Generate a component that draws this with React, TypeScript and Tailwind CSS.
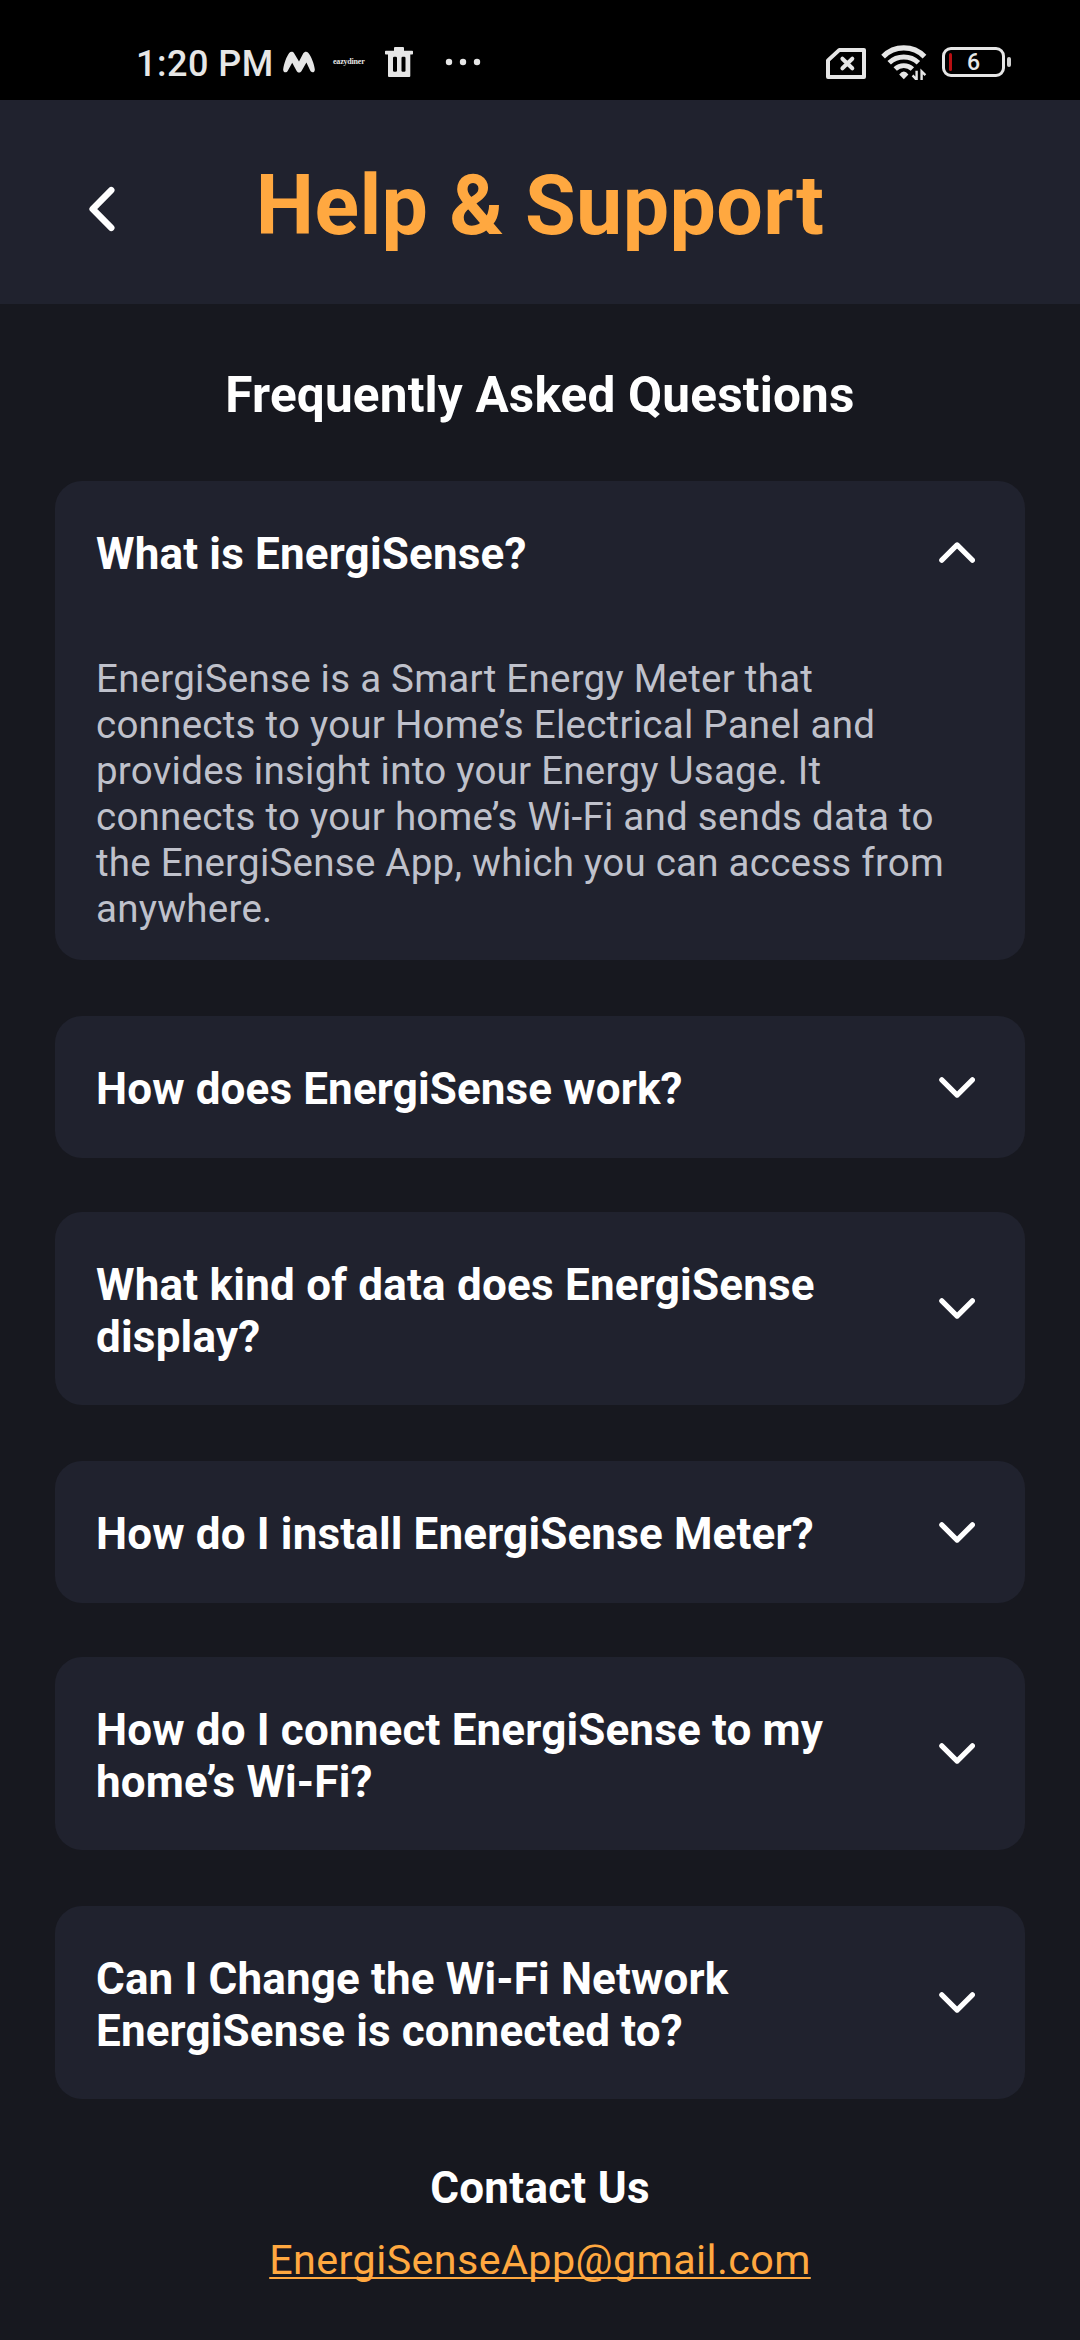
import { useState } from 'react';

type Faq = { question: string; answer?: string; tracking: string; spacing: string };

const faqs: Faq[] = [
  {
    question: 'What is EnergiSense?',
    answer:
      'EnergiSense is a Smart Energy Meter that connects to your Home’s Electrical Panel and provides insight into your Energy Usage. It connects to your home’s Wi-Fi and sends data to the EnergiSense App, which you can access from anywhere.',
    tracking: 'tracking-[0.17px]',
    spacing: 'mb-[56px]',
  },
  { question: 'How does EnergiSense work?', tracking: 'tracking-[0.13px]', spacing: 'mb-[54px]' },
  {
    question: 'What kind of data does EnergiSense display?',
    tracking: 'tracking-[0.21px]',
    spacing: 'mb-[56px]',
  },
  { question: 'How do I install EnergiSense Meter?', tracking: 'tracking-[0.15px]', spacing: 'mb-[54px]' },
  {
    question: 'How do I connect EnergiSense to my home’s Wi-Fi?',
    tracking: 'tracking-[0.15px]',
    spacing: 'mb-[56px]',
  },
  {
    question: 'Can I Change the Wi-Fi Network EnergiSense is connected to?',
    tracking: 'tracking-[0.14px]',
    spacing: 'mb-[63px]',
  },
];

function MessengerMark() {
  return (
    <svg className="h-9 w-8 shrink-0" viewBox="0 0 32 36" fill="#e6e6e6">
      <path d="M0.2 25.2 C1 19.5 3.6 12.4 6.2 9 C7.6 7.3 9.9 7.4 11.1 9.2 L16 17.4 L20.3 9.3 C21.5 7.3 24 7.2 25.4 9 C28.4 12.8 31 19.5 31.8 25.2 C32.2 28.7 28.4 29.3 27.2 26.6 L23.4 18.6 L18.4 27.2 C17.2 29 14.9 29 13.8 27.2 L9.2 18.8 L4.8 26.8 C3.4 29.3 -0.2 28.6 0.2 25.2 Z" />
    </svg>
  );
}

function TrashIcon() {
  return (
    <svg className="ml-[20px] h-9 w-7 shrink-0" viewBox="0 0 28 36" fill="#e6e6e6">
      <path d="M9 6.7 V4 Q9 3 10 3 H18 Q19 3 19 4 V6.7 H27.2 Q28 6.7 28 7.5 V9.7 Q28 10.5 27.2 10.5 H25.3 V32 Q25.3 33 24.3 33 H4 Q3 33 3 32 V10.5 H0.8 Q0 10.5 0 9.7 V7.5 Q0 6.7 0.8 6.7 Z" />
      <rect x="8" y="12.7" width="4" height="15" rx="1.2" fill="#000" />
      <rect x="16.5" y="12.7" width="4" height="15" rx="1.2" fill="#000" />
    </svg>
  );
}

function StatusBar() {
  return (
    <div className="flex h-[100px] items-center bg-black pt-[24px] pr-[69px] pl-[136px] text-[#e6e6e6]">
      <span className="mt-1 w-[147px] text-[36px] leading-[42px] font-medium tracking-[0.5px] whitespace-nowrap">
        1:20 PM
      </span>
      <MessengerMark />
      <span className="ml-[18px] w-8 font-['Liberation_Serif',serif] text-[8px] leading-[10px] font-bold tracking-[-0.2px] whitespace-nowrap">
        eazydiner
      </span>
      <TrashIcon />
      <svg className="ml-[32px] h-9 w-9" viewBox="0 0 36 36" fill="#e6e6e6">
        <circle cx="4" cy="18" r="3.2" />
        <circle cx="18" cy="18" r="3.2" />
        <circle cx="32" cy="18" r="3.2" />
      </svg>
      <div className="ml-auto flex items-center gap-[15px]">
        <svg
          className="h-9 w-10"
          viewBox="0 0 40 36"
          fill="none"
          stroke="#e6e6e6"
          strokeLinejoin="round"
          strokeLinecap="round"
        >
          <path d="M13.4 5.9 H38 V33 H2 V16.4 Z" strokeWidth="4" />
          <path d="M16.4 14.7 L26.3 24.3 M26.3 14.7 L16.4 24.3" strokeWidth="4" />
        </svg>
        <svg className="h-9 w-[46px]" viewBox="0 0 46 36" fill="none" stroke="#e6e6e6">
          <path d="M2.1 12.6 A29 29 0 0 1 43.5 12.6" strokeWidth="5.2" />
          <path d="M8.2 18.8 A21.3 21.3 0 0 1 37.4 18.8" strokeWidth="5" />
          <path d="M14.2 25 A12.4 12.4 0 0 1 31.4 25" strokeWidth="4.8" />
          <path d="M18.2 30.4 Q22.8 24.6 27.4 30.4 L22.8 35.2 Z" fill="#e6e6e6" stroke="none" />
          <path d="M35.6 26.7 V35.8 L31.6 31.4 M40.6 36.2 V27.4 L44.4 31.2" strokeWidth="2.4" />
        </svg>
        <div className="flex items-center">
          <div className="relative flex h-[30px] w-[63px] items-center justify-center rounded-[9px] border-[3px] border-[#e6e6e6]">
            <div className="absolute left-[4px] h-[18px] w-[3px] rounded-full bg-[#b80f12]" />
            <span className="pt-[2px] text-[23px] leading-[24px] font-medium">6</span>
          </div>
          <div className="ml-[2px] h-[10px] w-[4px] rounded-[2px] bg-[#d0d0d0]" />
        </div>
      </div>
    </div>
  );
}

function Chevron({ open }: { open: boolean }) {
  return (
    <svg
      className="h-[52px] w-9 shrink-0"
      viewBox="0 0 36 52"
      fill="none"
      stroke="#fff"
      strokeWidth="5.2"
      strokeLinecap="round"
      strokeLinejoin="round"
    >
      <path d={open ? 'M2.8 31.2 L18.1 15.9 L33.4 31.2' : 'M2.8 15.8 L18.1 31.1 L33.4 15.8'} />
    </svg>
  );
}

function FaqCard({ faq, open, onToggle }: { faq: Faq; open: boolean; onToggle: () => void }) {
  return (
    <section className={`rounded-[27px] bg-[#20222e] ${faq.spacing}`}>
      <button
        onClick={onToggle}
        className="flex min-h-[142px] w-full items-center justify-between pt-[47px] pr-[50px] pb-[42px] pl-[41px] text-left"
      >
        <h3 className={`w-[740px] self-start text-[44px] leading-[52px] font-bold text-white ${faq.tracking}`}>
          {faq.question}
        </h3>
        <Chevron open={open} />
      </button>
      {open && faq.answer && (
        <p className="w-[900px] pt-[33px] pb-[28px] pl-[41px] text-[38.5px] leading-[46px] tracking-[0.25px] text-[#bfc1cb]">
          {faq.answer}
        </p>
      )}
    </section>
  );
}

export default function App() {
  const [openIndex, setOpenIndex] = useState(0);

  return (
    <div className="flex min-h-[2340px] w-[1080px] flex-col bg-[#17181f] font-[Roboto,sans-serif]">
      <StatusBar />
      <header className="grid h-[204px] grid-cols-[200px_1fr_200px] bg-[#20222e]">
        <button aria-label="Back" className="mt-[84px] ml-[86px] h-[50px] w-8">
          <svg
            className="h-[50px] w-8"
            viewBox="0 0 32 50"
            fill="none"
            stroke="#fff"
            strokeWidth="6.6"
            strokeLinecap="round"
            strokeLinejoin="round"
          >
            <path d="M25.2 6.2 L6.7 25 L25.2 43.8" />
          </svg>
        </button>
        <h1 className="pt-[55px] text-center text-[82.5px] leading-[101px] font-bold tracking-[0.4px] whitespace-nowrap text-[#ffa840]">
          Help &amp; Support
        </h1>
      </header>
      <main className="flex flex-col px-[55px] pt-[62px]">
        <h2 className="mb-[57px] text-center text-[49.5px] leading-[58px] font-bold tracking-[0.18px] text-white">
          Frequently Asked Questions
        </h2>
        {faqs.map((faq, i) => (
          <FaqCard
            key={faq.question}
            faq={faq}
            open={i === openIndex}
            onToggle={() => setOpenIndex(i === openIndex ? -1 : i)}
          />
        ))}
        <h2 className="mb-[22px] text-center text-[44px] leading-[52px] font-bold tracking-[0.25px] text-white">
          Contact Us
        </h2>
        <a
          href="mailto:EnergiSenseApp@gmail.com"
          className="self-center text-[41.25px] leading-[48px] tracking-[0.42px] text-[#ffa840] underline decoration-2 underline-offset-[3px] [text-decoration-skip-ink:none]"
        >
          EnergiSenseApp@gmail.com
        </a>
      </main>
    </div>
  );
}
